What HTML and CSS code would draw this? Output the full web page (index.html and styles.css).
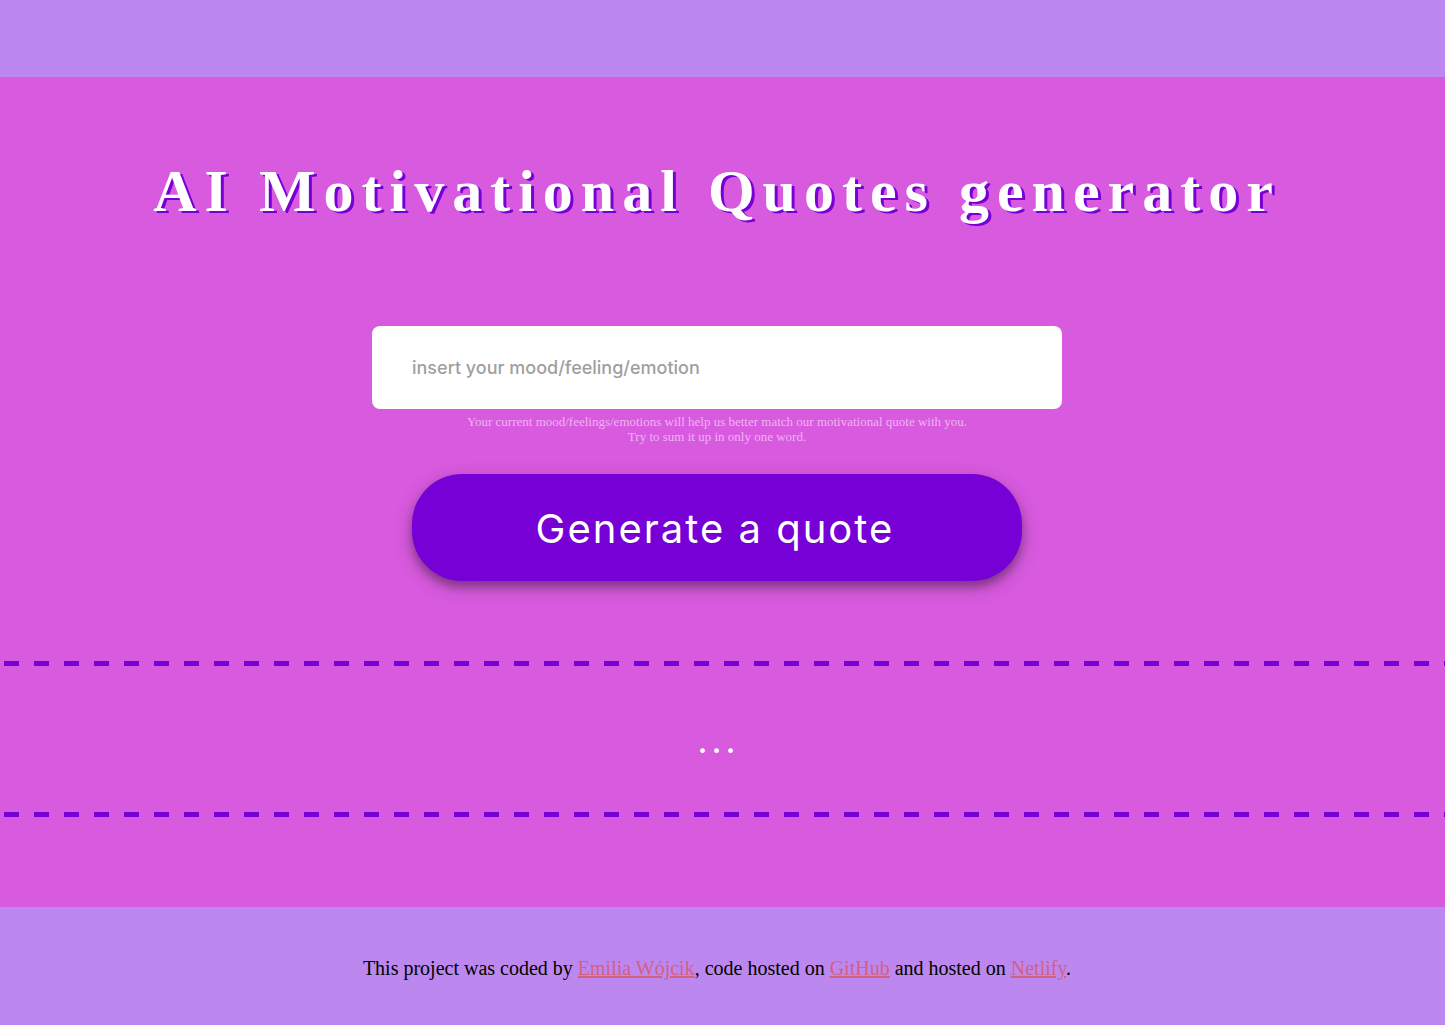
FILE: index.html
```html
<!DOCTYPE html>
<html lang="en">
<head>
<meta charset="utf-8">
<meta name="viewport" content="width=device-width, initial-scale=1">
<title>AI Motivational Quotes generator</title>
<link rel="stylesheet" href="styles.css">
</head>
<body>
<main class="app">
  <h1 class="title">AI Motivational Quotes generator</h1>
  <form class="quote-form">
    <input class="mood-input" type="text" placeholder="insert your mood/feeling/emotion" aria-label="Mood" aria-describedby="hint">
    <p class="hint" id="hint">Your current mood/feelings/emotions will help us better match our motivational quote with you.<br>Try to sum it up in only one word.</p>
    <button class="generate" type="button">Generate a quote</button>
  </form>
  <section class="quote" aria-live="polite">...</section>
</main>
<footer class="footer">
  This project was coded by <a href="#">Emilia Wójcik</a>, code hosted on <a href="#">GitHub</a> and hosted on <a href="#">Netlify</a>.
</footer>
</body>
</html>
```
FILE: styles.css
```css
* {
  box-sizing: border-box;
}

body {
  margin: 0;
  padding-top: 77px;
  background: #bc88ef;
  font-family: "Liberation Serif", "Times New Roman", serif;
}

.app {
  padding: 80px 0 90px;
  background: #d85adf;
}

.title {
  margin: 0;
  padding-right: 11px;
  color: #fff;
  font-size: 60px;
  line-height: 69px;
  letter-spacing: 8px;
  text-align: center;
  text-shadow: 3px 2px #7600d6;
}

.quote-form {
  display: flex;
  flex-direction: column;
  align-items: center;
  margin-top: 100px;
  padding-right: 11px;
}

.mood-input {
  width: 690px;
  max-width: 100%;
  height: 83px;
  padding: 0 40px;
  border: 0;
  border-radius: 8px;
  background: #fff;
  font-family: Inter, sans-serif;
  font-size: 18px;
  font-weight: 500;
}

.mood-input::placeholder {
  color: #9f9f9f;
}

.hint {
  margin: 5px 0 30px;
  color: #f1b2f3;
  font-size: 13px;
  line-height: 15px;
  text-align: center;
}

.generate {
  width: 610px;
  max-width: 100%;
  height: 107px;
  padding: 2px 4px 0 0;
  border: 0;
  border-radius: 50px;
  background: #7600d6;
  box-shadow: 0 6px 10px rgba(0, 0, 0, 0.3), 0 6px 20px rgba(0, 0, 0, 0.18);
  color: #fff;
  font-family: Inter, sans-serif;
  font-size: 40px;
  letter-spacing: 2px;
}

/* Long dashes above and below the quote */
.quote {
  --dash: linear-gradient(to right, #7600d6 50%, transparent 50%);
  margin-top: 80px;
  padding: 56px 8px 54px 0;
  background-image: var(--dash), var(--dash);
  background-position: 4px top, 4px bottom;
  background-repeat: repeat-x;
  background-size: 30px 5px;
  color: #fff;
  font-size: 40px;
  line-height: 46px;
  letter-spacing: 4px;
  text-align: center;
}

.footer {
  padding: 50px 11px 45px 0;
  color: #000;
  font-size: 20px;
  line-height: 23px;
  text-align: center;
}

.footer a {
  color: #d4607f;
}
```
